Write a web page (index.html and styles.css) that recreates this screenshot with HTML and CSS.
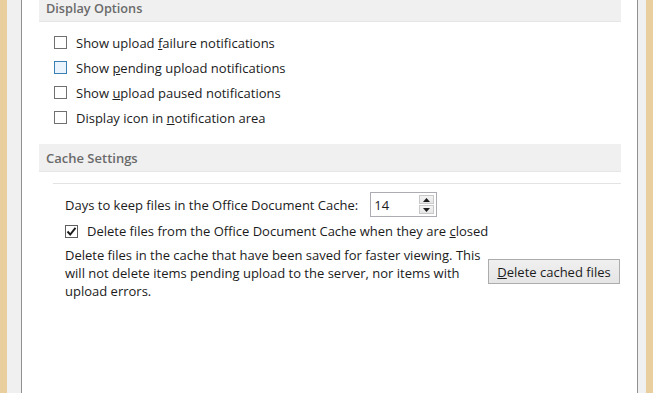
FILE: index.html
```html
<!DOCTYPE html>
<html>
<head>
<meta charset="utf-8">
<link rel="stylesheet" href="styles.css">
</head>
<body>
<div class="frame">
  <div class="edge tan"></div>
  <div class="edge gray"></div>
  <main class="panel">
    <div class="band band-top">Display Options</div>
    <div class="checks">
      <label class="row"><span class="box"></span><span>Show upload <u>f</u>ailure notifications</span></label>
      <label class="row"><span class="box hover"></span><span>Show <u>p</u>ending upload notifications</span></label>
      <label class="row"><span class="box"></span><span>Show <u>u</u>pload paused notifications</span></label>
      <label class="row"><span class="box"></span><span>Display icon in <u>n</u>otification area</span></label>
    </div>
    <div class="band band-cache">Cache Settings</div>
    <div class="rule"></div>
    <div class="cache">
      <div class="days">
        <span>Days to keep files in the Office Document Cache:</span>
        <div class="spin">
          <span class="spin-val">14</span>
          <div class="spin-btns">
            <span class="sb"><svg width="7" height="4" viewBox="0 0 7 4"><path d="M0 4 L3.5 0 L7 4 Z" fill="#1a1a1a"/></svg></span>
            <span class="sb"><svg width="7" height="4" viewBox="0 0 7 4"><path d="M0 0 L7 0 L3.5 4 Z" fill="#1a1a1a"/></svg></span>
          </div>
        </div>
      </div>
      <label class="row row-checked"><span class="box checked"><svg width="11" height="11" viewBox="0 0 11 11"><path d="M1.5 5.5 L4.2 8.5 L9.5 1.8" fill="none" stroke="#1a1a1a" stroke-width="1.9"/></svg></span><span>Delete files from the Office Document Cache when they are <u>c</u>losed</span></label>
      <div class="desc-row">
        <p class="desc">Delete files in the cache that have been saved for faster viewing. This<br>will not delete items pending upload to the server, nor items with<br>upload errors.</p>
        <button class="btn"><u>D</u>elete cached files</button>
      </div>
    </div>
  </main>
  <div class="edge gray right"></div>
  <div class="edge tan"></div>
</div>
</body>
</html>
```

FILE: styles.css
```css
html, body {
  margin: 0;
  padding: 0;
  height: 100%;
  overflow: hidden;
}
body {
  font-family: "Open Sans", "Noto Sans", sans-serif;
  font-size: 13px;
  color: #1b1b1b;
}
.frame {
  display: flex;
  height: 393px;
  width: 653px;
}
.edge.tan {
  width: 7px;
  background: #e8cf9d;
  flex: none;
}
.edge.gray {
  width: 14px;
  background: #f0f0f0;
  border-right: 1px solid #8f9090;
  flex: none;
}
.edge.gray.right {
  width: 8px;
  border-right: none;
  border-left: 1px solid #8f9090;
}
.panel {
  flex: 1;
  background: #ffffff;
  display: flex;
  flex-direction: column;
}
.band {
  margin: 0 16px 0 17px;
  height: 28px;
  line-height: 28px;
  background: #f0f0f0;
  border-bottom: 1px solid #e6e6e6;
  padding-left: 7px;
  font-weight: 600;
  font-size: 13px;
  color: #6a6a6a;
  box-sizing: border-box;
}
.band-top {
  margin-top: -6px;
  font-size: 12.7px;
}
.band-cache {
  margin-top: 14px;
}
.checks {
  padding: 8px 0 0 32px;
  display: flex;
  flex-direction: column;
}
.row {
  display: flex;
  align-items: center;
  height: 25px;
  gap: 9px;
}
.box {
  width: 13px;
  height: 13px;
  box-sizing: border-box;
  border: 1px solid #707070;
  background: #fff;
  flex: none;
  display: flex;
  align-items: center;
  justify-content: center;
}
.box.hover {
  border-color: #3c7fb1;
  background: #eaf4fd;
}
.box.checked {
  border-color: #5e5e5e;
}
.rule {
  margin: 11px 16px 0 31px;
  height: 1px;
  background: #e3e3e3;
}
.cache {
  padding: 8px 0 0 43px;
  display: flex;
  flex-direction: column;
}
.days {
  display: flex;
  align-items: center;
  gap: 12px;
  height: 25px;
}
.spin {
  width: 67px;
  height: 25px;
  box-sizing: border-box;
  border: 1px solid #abadb3;
  display: flex;
  align-items: center;
  padding: 1px;
}
.spin-val {
  flex: 1;
  padding-left: 2px;
  font-size: 13px;
}
.spin-btns {
  display: flex;
  flex-direction: column;
  gap: 1px;
  margin-right: 1px;
}
.sb {
  width: 15px;
  height: 9px;
  box-sizing: border-box;
  border: 1px solid #c9c9c9;
  background: linear-gradient(#f3f3f3, #e6e6e6);
  display: flex;
  align-items: center;
  justify-content: center;
}
.row-checked {
  height: 22px;
  margin-top: 3px;
}
.desc-row {
  display: flex;
  align-items: center;
  margin-top: 4px;
}
.desc {
  margin: 0;
  line-height: 18px;
  width: 423px;
  flex: none;
}
.btn {
  width: 132px;
  height: 25px;
  box-sizing: border-box;
  border: 1px solid #acacac;
  background: linear-gradient(#f0f0f0, #e5e5e5);
  font-family: inherit;
  font-size: 13px;
  color: #1b1b1b;
  padding: 0;
  margin-top: -3px;
}
```
